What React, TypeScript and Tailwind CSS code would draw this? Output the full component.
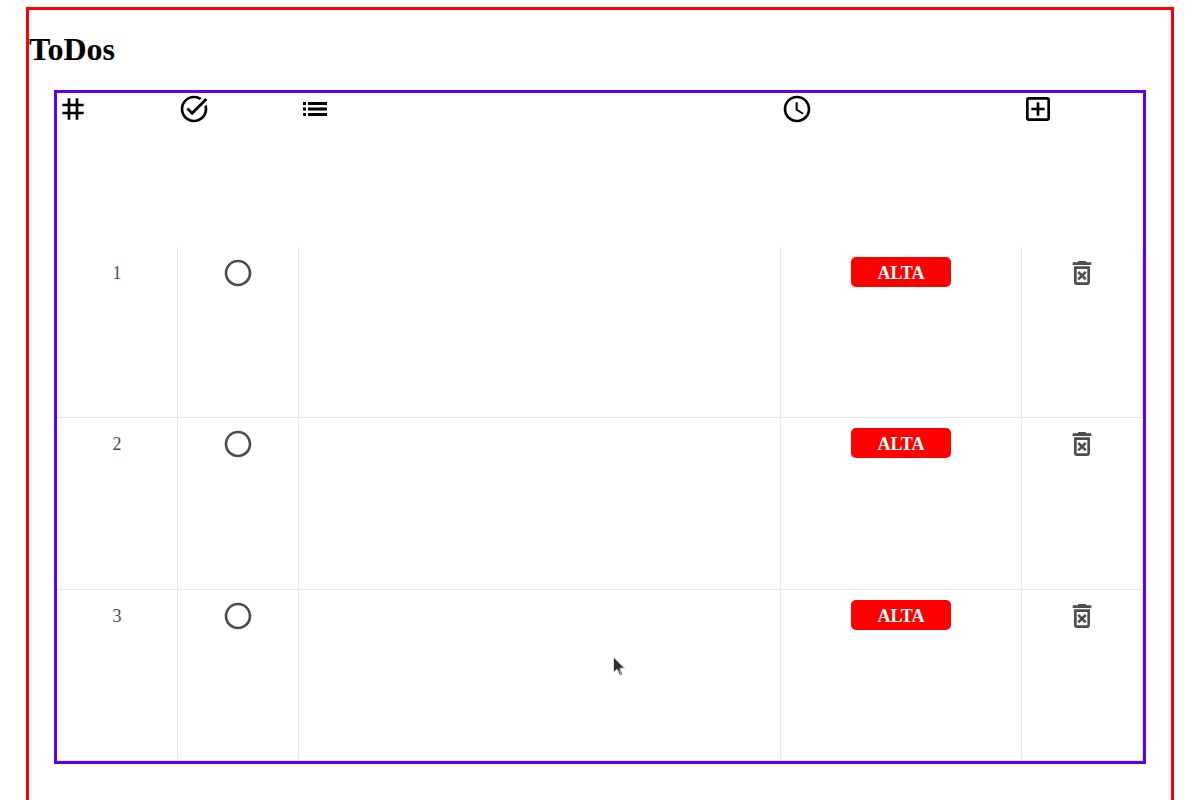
import { useState } from "react";
import {
  MdTag,
  MdTaskAlt,
  MdSchedule,
  MdOutlineAddBox,
  MdRadioButtonUnchecked,
  MdOutlineDeleteForever,
} from "react-icons/md";

type Todo = { id: number; text: string; priority: string; done: boolean };

const initialTodos: Todo[] = [
  { id: 1, text: "", priority: "ALTA", done: false },
  { id: 2, text: "", priority: "ALTA", done: false },
  { id: 3, text: "", priority: "ALTA", done: false },
];

const cell = "border-r border-b border-[#e5e7e9] p-0 pt-[10px] text-center align-top";
const head = "p-0 text-left align-top";

function ListIcon() {
  return (
    <svg className="size-8" viewBox="0 0 32 32" fill="currentColor" aria-hidden="true">
      <path d="M4 9h3v3H4zM9 9h19v3H9zM4 14.6h3v2.8H4zM9 14.6h19v2.8H9zM4 20h3v3H4zM9 20h19v3H9z" />
    </svg>
  );
}

function Pointer() {
  return (
    <svg
      className="pointer-events-none absolute top-[656px] left-[612px] h-[22px] w-[15px]"
      viewBox="0 0 15 22"
      aria-hidden="true"
    >
      <path
        d="M1.5 1v15.5l3.6-3.2 2.6 5.9 2.9-1.3-2.5-5.6h4.6z"
        fill="#2e2e2e"
        stroke="#e0e0e0"
        strokeWidth="1"
      />
      <path d="M7.6 14l2 5" stroke="#a8a8a8" strokeWidth="1.6" />
    </svg>
  );
}

export default function App() {
  const [todos, setTodos] = useState(initialTodos);

  const toggle = (id: number) =>
    setTodos(todos.map((t) => (t.id === id ? { ...t, done: !t.done } : t)));
  const remove = (id: number) => setTodos(todos.filter((t) => t.id !== id));
  const add = () =>
    setTodos([...todos, { id: todos.length + 1, text: "", priority: "ALTA", done: false }]);

  return (
    <div className="relative bg-white pt-[7px] font-['Liberation_Serif',serif] text-black">
      <main className="mx-[26px] min-h-screen border-[3px] border-[#ff0000]">
        <h1 className="mt-[21px] mb-[22px] text-[32px] leading-[37px] font-bold">ToDos</h1>
        <div className="mx-[25px] border-[3px] border-[#5b00ff]">
          <table className="w-full table-fixed border-separate border-spacing-0">
            <colgroup>
              <col className="w-[121px]" />
              <col className="w-[121px]" />
              <col />
              <col className="w-[241px]" />
              <col className="w-[121px]" />
            </colgroup>
            <thead>
              <tr className="h-[154px]">
                <th className={head} aria-label="Number">
                  <MdTag className="size-8" />
                </th>
                <th className={head} aria-label="Done">
                  <MdTaskAlt className="size-8" />
                </th>
                <th className={head} aria-label="Task">
                  <ListIcon />
                </th>
                <th className={head} aria-label="Priority">
                  <MdSchedule className="size-8" />
                </th>
                <th className={head}>
                  <button type="button" aria-label="Add" onClick={add} className="block">
                    <MdOutlineAddBox className="size-8" />
                  </button>
                </th>
              </tr>
            </thead>
            <tbody>
              {todos.map((todo) => (
                <tr
                  key={todo.id}
                  className="h-[171px] text-[18px] leading-8 text-[#4d4d4d] even:h-[172px]"
                >
                  <td className={cell}>{todo.id}</td>
                  <td className={cell}>
                    <label className="relative mx-auto block size-8">
                      <input
                        type="checkbox"
                        aria-label="Done"
                        checked={todo.done}
                        onChange={() => toggle(todo.id)}
                        className="absolute inset-0 opacity-0"
                      />
                      {todo.done ? (
                        <MdTaskAlt className="size-8" />
                      ) : (
                        <MdRadioButtonUnchecked className="size-8" />
                      )}
                    </label>
                  </td>
                  <td className={cell}>{todo.text}</td>
                  <td className={cell}>
                    <span className="mx-auto block h-[30px] w-[100px] rounded-[5px] bg-[#ff0000] font-bold text-white">
                      {todo.priority}
                    </span>
                  </td>
                  <td className={cell}>
                    <button
                      type="button"
                      aria-label="Delete"
                      onClick={() => remove(todo.id)}
                      className="mx-auto block"
                    >
                      <MdOutlineDeleteForever className="size-8" />
                    </button>
                  </td>
                </tr>
              ))}
            </tbody>
          </table>
        </div>
      </main>
      <Pointer />
    </div>
  );
}
